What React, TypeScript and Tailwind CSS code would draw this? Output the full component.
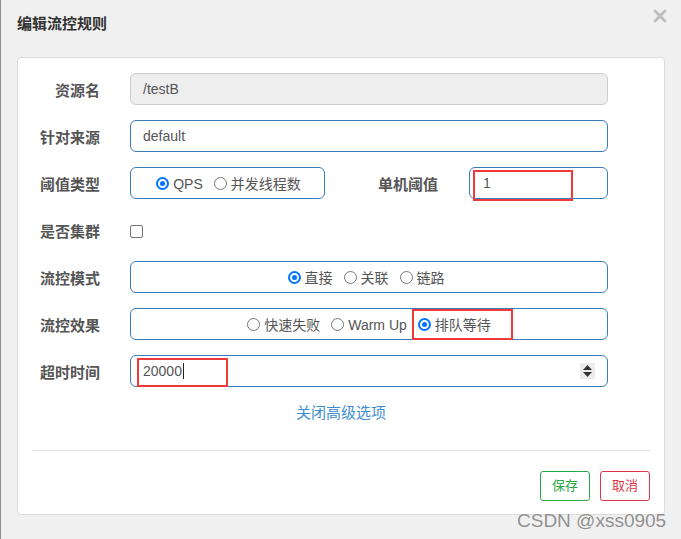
import React from "react";

const FONT = { fontFamily: '"Liberation Sans", "Noto Sans CJK SC", sans-serif' };

function Radio({ label, checked }: { label: string; checked?: boolean }) {
  return (
    <span className="flex items-center">
      {checked ? (
        <span className="flex h-[13px] w-[13px] items-center justify-center rounded-full border-[2px] border-[#0075ff] bg-white">
          <span className="h-[5px] w-[5px] rounded-full bg-[#0075ff]" />
        </span>
      ) : (
        <span className="h-[13px] w-[13px] rounded-full border border-[#767676] bg-white" />
      )}
      <span className="ml-[4px] pt-[1px] text-[14px] leading-[20px] text-[#555]">{label}</span>
    </span>
  );
}

function Label({ children }: { children: React.ReactNode }) {
  return (
    <div className="w-[82px] shrink-0 pt-[8px] text-right text-[15px] font-bold leading-[20px] text-[#555]">
      {children}
    </div>
  );
}

function Row({ label, children }: { label: string; children: React.ReactNode }) {
  return (
    <div className="flex h-[32px] items-start gap-[30px]">
      <Label>{label}</Label>
      <div className="h-[32px] w-[478px]">{children}</div>
    </div>
  );
}

const blueBox = "relative flex h-[32px] items-center rounded-[6px] border border-[#3a7dbd] bg-white";
const redBox = "pointer-events-none absolute border-2 border-[#f03a3a]";

export default function App() {
  return (
    <div style={FONT} className="h-[539px] w-[681px] overflow-hidden border-l border-[#8f8f8f] bg-[#f0f0f0]">
      <div className="relative h-[57px]">
        <div className="pl-[16px] pt-[14px] text-[15px] font-bold leading-[20px] text-[#333]">编辑流控规则</div>
        <svg className="absolute left-[652px] top-[9px]" width="14" height="14" viewBox="0 0 14 14">
          <path d="M2 2 L12 12 M12 2 L2 12" stroke="#bdbdbd" strokeWidth="2.8" strokeLinecap="round" />
        </svg>
      </div>
      <div className="ml-[16px] h-[458px] w-[648px] rounded-[4px] border border-[#dcdcdc] bg-white">
        <div className="flex flex-col gap-[15px] pt-[15px]">
          <Row label="资源名">
            <div className="flex h-[32px] items-center rounded-[6px] border border-[#cccccc] bg-[#eeeeee] pl-[12px] text-[14px] text-[#555]">
              /testB
            </div>
          </Row>
          <Row label="针对来源">
            <div className={blueBox + " pl-[12px] text-[14px] text-[#555]"}>default</div>
          </Row>
          <Row label="阈值类型">
            <div className="flex h-[32px] items-start">
              <div className={blueBox + " w-[195px] shrink-0 justify-center gap-[11px] pl-[2px]"}>
                <Radio label="QPS" checked />
                <Radio label="并发线程数" />
              </div>
              <div className="flex-1 pr-[31px] pt-[8px] text-right text-[15px] font-bold leading-[20px] text-[#555]">
                单机阈值
              </div>
              <div className={blueBox + " w-[139px] shrink-0 pl-[13px] text-[14px] text-[#555]"}>
                1
                <div className={redBox + " left-[3px] top-[2px] h-[31px] w-[100px]"} />
              </div>
            </div>
          </Row>
          <Row label="是否集群">
            <div className="flex h-[32px] items-center pt-[3px]">
              <span className="h-[13px] w-[13px] rounded-[2px] border border-[#767676] bg-white" />
            </div>
          </Row>
          <Row label="流控模式">
            <div className={blueBox + " justify-center gap-[11px] pr-[6px]"}>
              <Radio label="直接" checked />
              <Radio label="关联" />
              <Radio label="链路" />
            </div>
          </Row>
          <Row label="流控效果">
            <div className={blueBox + " justify-center gap-[11px]"}>
              <Radio label="快速失败" />
              <Radio label="Warm Up" />
              <Radio label="排队等待" checked />
              <div className={redBox + " left-[281px] top-0 h-[31px] w-[101px]"} />
            </div>
          </Row>
          <Row label="超时时间">
            <div className={blueBox + " justify-between pl-[12px] pr-[12px] text-[14px] text-[#555]"}>
              <span className="flex items-center">
                20000
                <span className="ml-[1px] h-[16px] w-[1px] bg-[#222]" />
              </span>
              <span className="flex h-[16px] w-[15px] flex-col items-center justify-center gap-[2px] bg-[#ececec]">
                <svg width="9" height="5" viewBox="0 0 9 5">
                  <path d="M4.5 0 L9 5 L0 5 Z" fill="#333" />
                </svg>
                <svg width="9" height="5" viewBox="0 0 9 5">
                  <path d="M0 0 L9 0 L4.5 5 Z" fill="#333" />
                </svg>
              </span>
              <div className={redBox + " left-[6px] top-[2px] h-[29px] w-[91px]"} />
            </div>
          </Row>
        </div>
        <div className="mt-[16px] flex h-[20px] justify-center">
          <span className="text-[15px] leading-[20px] text-[#3c8dd0]">关闭高级选项</span>
        </div>
        <div className="ml-[14px] mr-[13px] mt-[27px] h-px bg-[#e3e3e3]" />
        <div className="mt-[20px] flex justify-end gap-[10px] pr-[14px]">
          <button className="h-[30px] w-[50px] rounded-[3px] border border-[#28a745] bg-white text-[13px] text-[#28a745]">
            保存
          </button>
          <button className="h-[30px] w-[50px] rounded-[3px] border border-[#dc3545] bg-white text-[13px] text-[#dc3545]">
            取消
          </button>
        </div>
      </div>
      <div
        className="absolute left-[517px] top-[508px] text-[19px] leading-[26px] text-[#8f8f8f]"
        style={{ textShadow: "0 0 1px #fff" }}
      >
        CSDN @xss0905
      </div>
    </div>
  );
}
